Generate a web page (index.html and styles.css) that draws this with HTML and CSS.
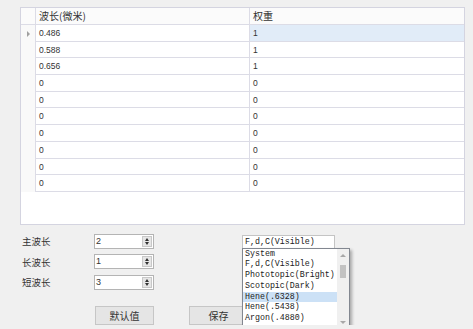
FILE: index.html
```html
<!DOCTYPE html>
<html lang="zh-CN">
<head>
    <meta charset="UTF-8">
    <title>波长设置</title>
    <link rel="stylesheet" href="styles.css">
</head>
<body>
    <div class="grid-box">
        <div class="row head">
            <div class="rh"></div>
            <div class="cell c1">波长(微米)</div>
            <div class="cell c2">权重</div>
        </div>
        <div class="row">
            <div class="rh"><span class="arrow"></span></div>
            <div class="cell c1">0.486</div>
            <div class="cell c2 selected">1</div>
        </div>
        <div class="row">
            <div class="rh"></div>
            <div class="cell c1">0.588</div>
            <div class="cell c2">1</div>
        </div>
        <div class="row">
            <div class="rh"></div>
            <div class="cell c1">0.656</div>
            <div class="cell c2">1</div>
        </div>
        <div class="row"><div class="rh"></div><div class="cell c1">0</div><div class="cell c2">0</div></div>
        <div class="row"><div class="rh"></div><div class="cell c1">0</div><div class="cell c2">0</div></div>
        <div class="row"><div class="rh"></div><div class="cell c1">0</div><div class="cell c2">0</div></div>
        <div class="row"><div class="rh"></div><div class="cell c1">0</div><div class="cell c2">0</div></div>
        <div class="row"><div class="rh"></div><div class="cell c1">0</div><div class="cell c2">0</div></div>
        <div class="row"><div class="rh"></div><div class="cell c1">0</div><div class="cell c2">0</div></div>
        <div class="row"><div class="rh"></div><div class="cell c1">0</div><div class="cell c2">0</div></div>
    </div>

    <div class="form">
        <div class="field-row">
            <label>主波长</label>
            <div class="spin"><span class="val">2</span><span class="spin-btn"><i class="up"></i><i class="down"></i></span></div>
            <div class="combo">
                <div class="combo-value">F,d,C(Visible)</div>
                <div class="combo-list">
                    <ul>
                        <li>System</li>
                        <li>F,d,C(Visible)</li>
                        <li>Phototopic(Bright)</li>
                        <li>Scotopic(Dark)</li>
                        <li class="active">Hene(.6328)</li>
                        <li>Hene(.5438)</li>
                        <li>Argon(.4880)</li>
                    </ul>
                    <div class="scroll">
                        <i class="s-up"></i>
                        <span class="thumb"></span>
                        <i class="s-down"></i>
                    </div>
                </div>
            </div>
        </div>
        <div class="field-row">
            <label>长波长</label>
            <div class="spin"><span class="val">1</span><span class="spin-btn"><i class="up"></i><i class="down"></i></span></div>
        </div>
        <div class="field-row">
            <label>短波长</label>
            <div class="spin"><span class="val">3</span><span class="spin-btn"><i class="up"></i><i class="down"></i></span></div>
        </div>
        <div class="buttons">
            <button class="btn">默认值</button>
            <button class="btn">保存</button>
        </div>
    </div>
</body>
</html>
```

FILE: styles.css
```css
body {
    margin: 0;
    background-color: #f0f0f0;
    font-family: "Noto Sans CJK SC", "Liberation Sans", sans-serif;
    color: #333;
}
.grid-box {
    box-sizing: border-box;
    width: 445px;
    height: 218px;
    margin: 7px 0 0 20px;
    background-color: white;
    border: 1px solid #d4d4e0;
}
.row {
    display: flex;
    height: 16.7px;
}
.row .cell {
    border-bottom: 1px solid #dcdce6;
}
.row.head {
    height: 16px;
    background-color: #fbfbfb;
    border-bottom: 1px solid #dcdce6;
}
.row.head .cell {
    border-bottom: none;
    font-size: 10px;
    line-height: 15px;
}
.rh {
    width: 14px;
    border-right: 1px solid #dcdce6;
    background-color: #f9f9f9;
    position: relative;
}
.row.head .rh {
    background-color: #fbfbfb;
}
.arrow {
    position: absolute;
    left: 6px;
    top: 6px;
    border-left: 3px solid #a0a0a0;
    border-top: 3px solid transparent;
    border-bottom: 3px solid transparent;
}
.cell {
    box-sizing: border-box;
    padding-left: 3px;
    font-family: "Liberation Sans", sans-serif;
    font-size: 8.5px;
    line-height: 16px;
    color: #333;
}
.row.head .cell {
    font-family: "Noto Sans CJK SC", sans-serif;
}
.c1 {
    width: 214px;
    border-right: 1px solid #dcdce6;
}
.c2 {
    flex: 1;
}
.c2.selected {
    background-color: #e1ecf8;
}

.form {
    padding: 6px 0 0 22px;
}
.field-row {
    display: flex;
    align-items: center;
    height: 20.5px;
}
.field-row label {
    width: 72px;
    font-size: 9.5px;
    color: #333;
}
.spin {
    box-sizing: border-box;
    display: flex;
    width: 60px;
    height: 15px;
    background-color: white;
    border: 1px solid #b4b4b4;
}
.spin .val {
    flex: 1;
    padding-left: 1px;
    font-family: "Liberation Sans", sans-serif;
    font-size: 9px;
    line-height: 12px;
}
.spin-btn {
    box-sizing: border-box;
    width: 10px;
    margin: 1px;
    background-color: #e6e6e6;
    border: 1px solid #c8c8c8;
    display: flex;
    flex-direction: column;
    align-items: center;
    justify-content: center;
    gap: 1px;
}
.spin-btn .up {
    border-bottom: 3px solid #333;
    border-left: 2.5px solid transparent;
    border-right: 2.5px solid transparent;
}
.spin-btn .down {
    border-top: 3px solid #333;
    border-left: 2.5px solid transparent;
    border-right: 2.5px solid transparent;
}

.combo {
    position: relative;
    margin-left: 88px;
    margin-top: 1px;
}
.combo-value {
    box-sizing: border-box;
    width: 93px;
    height: 14px;
    padding-left: 2px;
    background-color: white;
    border: 1px solid #c4c4c4;
    font-family: "Liberation Mono", monospace;
    font-size: 8.3px;
    line-height: 12px;
    color: #222;
}
.combo-list {
    position: absolute;
    left: 0;
    top: 13px;
    box-sizing: border-box;
    width: 108px;
    height: 82px;
    display: flex;
    background-color: white;
    border: 1px solid #828790;
    box-shadow: 2px 2px 3px rgba(0,0,0,0.3);
    z-index: 2;
}
.combo-list ul {
    flex: 1;
    list-style: none;
    margin: 0;
    padding: 0;
    font-family: "Liberation Mono", monospace;
    font-size: 8.3px;
    line-height: 10.7px;
    color: #222;
}
.combo-list li {
    padding-left: 2px;
}
.combo-list li.active {
    background-color: #cce1f6;
}
.scroll {
    width: 12px;
    background-color: #f0f0f0;
    position: relative;
}
.s-up {
    position: absolute;
    left: 3px;
    top: 5px;
    border-bottom: 3px solid #a8a8a8;
    border-left: 3px solid transparent;
    border-right: 3px solid transparent;
}
.s-down {
    position: absolute;
    left: 3px;
    bottom: 5px;
    border-top: 3px solid #a8a8a8;
    border-left: 3px solid transparent;
    border-right: 3px solid transparent;
}
.thumb {
    position: absolute;
    left: 3px;
    top: 16px;
    width: 6px;
    height: 13px;
    background-color: #c2c2c2;
}

.buttons {
    display: flex;
    gap: 35px;
    margin: 13px 0 0 73px;
}
.btn {
    box-sizing: border-box;
    width: 59px;
    height: 19px;
    padding: 0;
    background-color: #e5e5e5;
    border: 1px solid #c6c6c6;
    font-family: "Noto Sans CJK SC", sans-serif;
    font-size: 10px;
    color: #333;
}
```
